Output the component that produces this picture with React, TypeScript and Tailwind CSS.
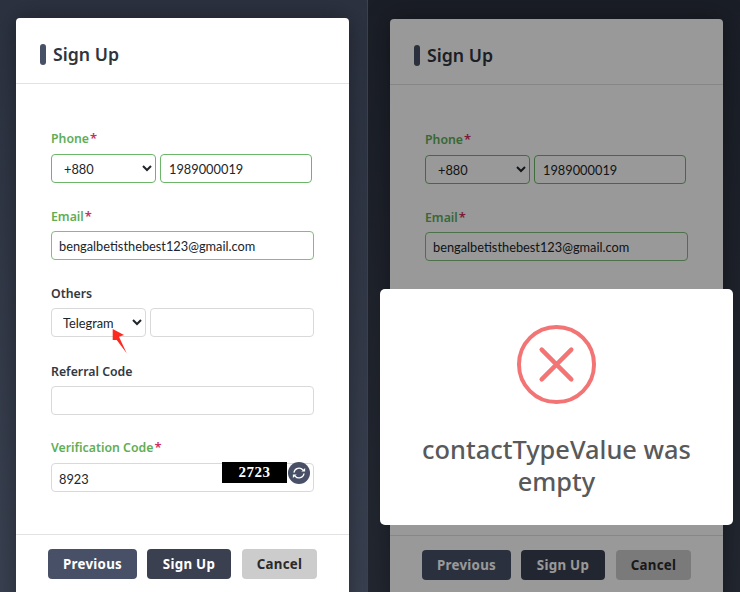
const fieldBase =
  "h-[29px] rounded-[4px] border bg-white font-['Lato',sans-serif] text-[12.8px] text-[#212529] outline-none"

const Label = ({ text, required }: { text: string; required?: boolean }) => (
  <div
    className={`h-[20px] text-[12.3px] font-semibold leading-[22px] ${
      required ? 'text-[#5fae57]' : 'text-[#33383f]'
    }`}
  >
    {text}
    {required && <span className="ml-[1px] text-[13px] leading-[14px] text-[#c9305f]">*</span>}
  </div>
)

const Button = ({ text, className }: { text: string; className: string }) => (
  <button
    className={`h-[30px] rounded-[4px] pt-[1px] text-[13.3px] font-bold tracking-[0.3px] ${className}`}
  >
    {text}
  </button>
)

const SignUpCard = () => (
  <div className="h-[640px] w-[333px] rounded-[4px] bg-white shadow-[0_0_24px_rgba(0,0,0,0.35)]">
    <div className="flex h-[66px] items-center gap-[7px] border-b border-[#e2e2e2] pl-[24px] pt-[8px]">
      <span className="h-[21px] w-[6px] rounded-[3px] bg-[#475067]" />
      <span className="text-[17.7px] font-semibold text-[#2f343d]">Sign Up</span>
    </div>

    <div className="relative h-[450px] px-[35px] pt-[44px]">
      <Label text="Phone" required />
      <div className="mt-[6px] flex gap-[4px]">
        <select
          defaultValue="+880"
          className={`${fieldBase} w-[105px] border-[#6cb66a] pl-[8px]`}
        >
          <option>+880</option>
        </select>
        <input
          defaultValue="1989000019"
          className={`${fieldBase} w-[152px] border-[#6cb66a] px-[8px]`}
        />
      </div>

      <div className="mt-[23px]">
        <Label text="Email" required />
        <input
          defaultValue="bengalbetisthebest123@gmail.com"
          className={`${fieldBase} mt-[5px] w-[263px] border-[#7fbf7c] px-[7px]`}
        />
      </div>

      <div className="mt-[23px]">
        <Label text="Others" />
        <div className="mt-[5px] flex gap-[4px]">
          <select
            defaultValue="Telegram"
            className={`${fieldBase} w-[95px] border-[#d9d9d9] pl-[7px]`}
          >
            <option>Telegram</option>
          </select>
          <input className={`${fieldBase} w-[164px] border-[#d9d9d9] px-[8px]`} />
        </div>
      </div>

      <div className="mt-[24px]">
        <Label text="Referral Code" />
        <input className={`${fieldBase} mt-[5px] w-[263px] border-[#d9d9d9] px-[8px]`} />
      </div>

      <div className="mt-[22px]">
        <Label text="Verification Code" required />
        <div className="relative mt-[6px] w-[263px]">
          <input
            defaultValue="8923"
            className={`${fieldBase} w-full border-[#d9d9d9] px-[7px] pt-[2px]`}
          />
          <div className="absolute left-[171px] top-[-1px] flex h-[21px] w-[65px] items-center justify-center bg-black font-['Liberation_Serif',serif] text-[15px] font-bold tracking-[0.5px] text-white">
            2723
          </div>
          <div className="absolute left-[237px] top-[-1px] flex h-[22px] w-[22px] items-center justify-center rounded-full bg-[#475067]">
            <svg width="14" height="14" viewBox="0 0 24 24" fill="none">
              <path d="M3.5 10.5A8.7 8.7 0 0 1 18.5 6.5" stroke="#fff" strokeWidth="2.2" strokeLinecap="round" />
              <path d="M20.5 13.5A8.7 8.7 0 0 1 5.5 17.5" stroke="#fff" strokeWidth="2.2" strokeLinecap="round" />
              <polygon points="16,9.5 22.5,9.5 22.5,3.5" fill="#fff" />
              <polygon points="8,14.5 1.5,14.5 1.5,20.5" fill="#fff" />
            </svg>
          </div>
        </div>
      </div>
    </div>

    <div className="flex gap-[10px] border-t border-[#e2e2e2] pl-[32px] pt-[14px]">
      <Button text="Previous" className="w-[89px] bg-[#475067] text-white" />
      <Button text="Sign Up" className="w-[84px] bg-[#3a4050] text-white" />
      <Button text="Cancel" className="ml-[1px] w-[75px] bg-[#cccccc] text-[#2a2a2a]" />
    </div>
  </div>
)

export default function App() {
  return (
    <div className="relative flex h-[592px] w-[740px] overflow-hidden font-['Noto_Sans','Open_Sans',sans-serif]">
      <div className="relative h-full w-[367px] shrink-0 bg-gradient-to-b from-[#2c3240] to-[#3a4151] pl-[16px] pt-[18px]">
        <SignUpCard />
        <svg
          className="absolute left-[108px] top-[324px]"
          width="22"
          height="32"
          viewBox="0 0 22 32"
        >
          <polygon points="4.7,5 16,11 11,12.7 18.7,29.3 8.7,16 4.7,16" fill="#ff2a1f" />
        </svg>
      </div>
      <div className="w-px shrink-0 bg-[#3d4350]" />
      <div className="relative h-full flex-1 bg-gradient-to-b from-[#2c3240] to-[#3a4151] pl-[22px] pt-[19px]">
        <SignUpCard />
        <div className="absolute inset-0 bg-black/40" />
      </div>

      <div className="absolute left-[380px] top-[289px] flex h-[236px] w-[353px] flex-col items-center rounded-[5px] bg-white pt-[36px]">
        <svg width="79" height="79" viewBox="0 0 80 80">
          <circle cx="40" cy="40" r="38" fill="none" stroke="#f27474" strokeWidth="4" />
          <path
            d="M25 25 L55 55 M55 25 L25 55"
            stroke="#f27474"
            strokeWidth="4.5"
            strokeLinecap="round"
          />
        </svg>
        <div className="mt-[29px] w-[300px] text-center text-[25.4px] font-medium leading-[32px] text-[#595959]">
          contactTypeValue was empty
        </div>
      </div>
    </div>
  )
}
